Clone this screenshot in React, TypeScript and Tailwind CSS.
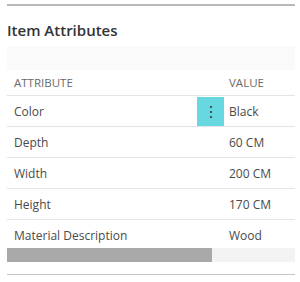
import React from 'react';

const rows = [
  { name: 'Color', value: 'Black', active: true },
  { name: 'Depth', value: '60 CM' },
  { name: 'Width', value: '200 CM' },
  { name: 'Height', value: '170 CM' },
  { name: 'Material Description', value: 'Wood' }
];

const App: React.FC = () => {
  return (
    <div
      className="flex w-[300px] h-[282px] flex-col bg-white pl-[7px] pr-[5px] pt-[4px] overflow-hidden"
      style={{ fontFamily: '"Open Sans", "Noto Sans", sans-serif' }}
    >
      <div className="h-[2px] w-full shrink-0 bg-[#b8b8b8]" />
      <h2 className="mt-[13px] text-[15px] leading-[22px] font-semibold text-[#333333]">Item Attributes</h2>
      <div className="mt-[5px] h-[24px] shrink-0 bg-[#fafafa]" />
      <div className="flex h-[26px] shrink-0 items-center border-b border-[#e4e4e4] text-[11.5px] uppercase text-[#6a6a6a]">
        <div className="w-[190px] pl-[7px]">Attribute</div>
        <div className="w-[27px]" />
        <div className="flex-1 pl-[5px]">Value</div>
      </div>
      {rows.map((row, i) => (
        <div
          key={row.name}
          className={`flex h-[31px] shrink-0 items-center pt-[1px] text-[12px] text-[#4a4a4a] ${
            i < rows.length - 1 ? 'border-b border-[#e4e4e4]' : ''
          }`}
        >
          <div className="w-[190px] pl-[7px]">{row.name}</div>
          <div
            className={`flex h-full w-[27px] flex-col items-center justify-center gap-[3px] ${
              row.active ? 'bg-[#67d8e0]' : ''
            }`}
          >
            {row.active && (
              <>
                <span className="h-[2px] w-[2px] bg-[#3c5a5c]" />
                <span className="h-[2px] w-[2px] bg-[#3c5a5c]" />
                <span className="h-[2px] w-[2px] bg-[#3c5a5c]" />
              </>
            )}
          </div>
          <div className="flex-1 pl-[5px]">{row.value}</div>
        </div>
      ))}
      <div className="mt-[-3px] flex h-[14px] shrink-0 bg-[#f3f3f3]">
        <div className="w-[205px] bg-[#a9a9a9]" />
      </div>
      <div className="mt-[12px] h-px shrink-0 bg-[#c6c6c6]" />
    </div>
  );
};

export default App;
